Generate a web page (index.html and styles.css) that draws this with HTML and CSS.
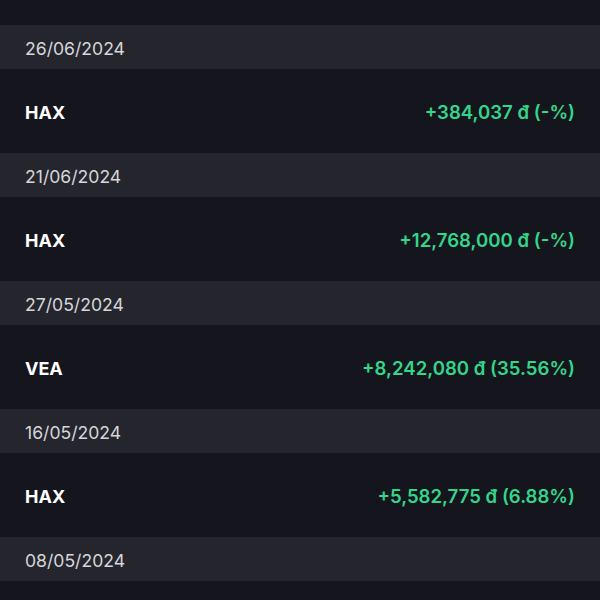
FILE: index.html
```html
<!DOCTYPE html>
<html lang="vi">
<head>
<meta charset="utf-8">
<link rel="stylesheet" href="styles.css">
</head>
<body>
<div class="list">
  <div class="row partial"></div>
  <div class="date">26/06/2024</div>
  <div class="row"><span class="ticker">HAX</span><span class="amount">+384,037 đ (-%)</span></div>
  <div class="date">21/06/2024</div>
  <div class="row"><span class="ticker">HAX</span><span class="amount">+12,768,000 đ (-%)</span></div>
  <div class="date">27/05/2024</div>
  <div class="row"><span class="ticker">VEA</span><span class="amount">+8,242,080 đ (35.56%)</span></div>
  <div class="date">16/05/2024</div>
  <div class="row"><span class="ticker">HAX</span><span class="amount">+5,582,775 đ (6.88%)</span></div>
  <div class="date">08/05/2024</div>
  <div class="row"></div>
</div>
</body>
</html>
```
FILE: styles.css
```css
html, body {
  margin: 0;
  padding: 0;
  background: #15151d;
}
body {
  width: 600px;
  height: 600px;
  overflow: hidden;
  font-family: "Inter", "Liberation Sans", sans-serif;
}
.list {
  display: flex;
  flex-direction: column;
}
.date {
  height: 44px;
  box-sizing: border-box;
  display: flex;
  align-items: center;
  padding: 3px 25px 0;
  background: #25262d;
  color: #d6d6da;
  font-size: 17.6px;
}
.row {
  height: 84px;
  box-sizing: border-box;
  display: flex;
  align-items: center;
  justify-content: space-between;
  padding: 2px 25px 0;
  background: #15151d;
}
.row.partial {
  height: 25px;
}
.ticker {
  color: #ffffff;
  font-weight: 700;
  font-size: 18px;
}
.amount {
  color: #34d58a;
  font-weight: 600;
  font-size: 18.6px;
}
```
